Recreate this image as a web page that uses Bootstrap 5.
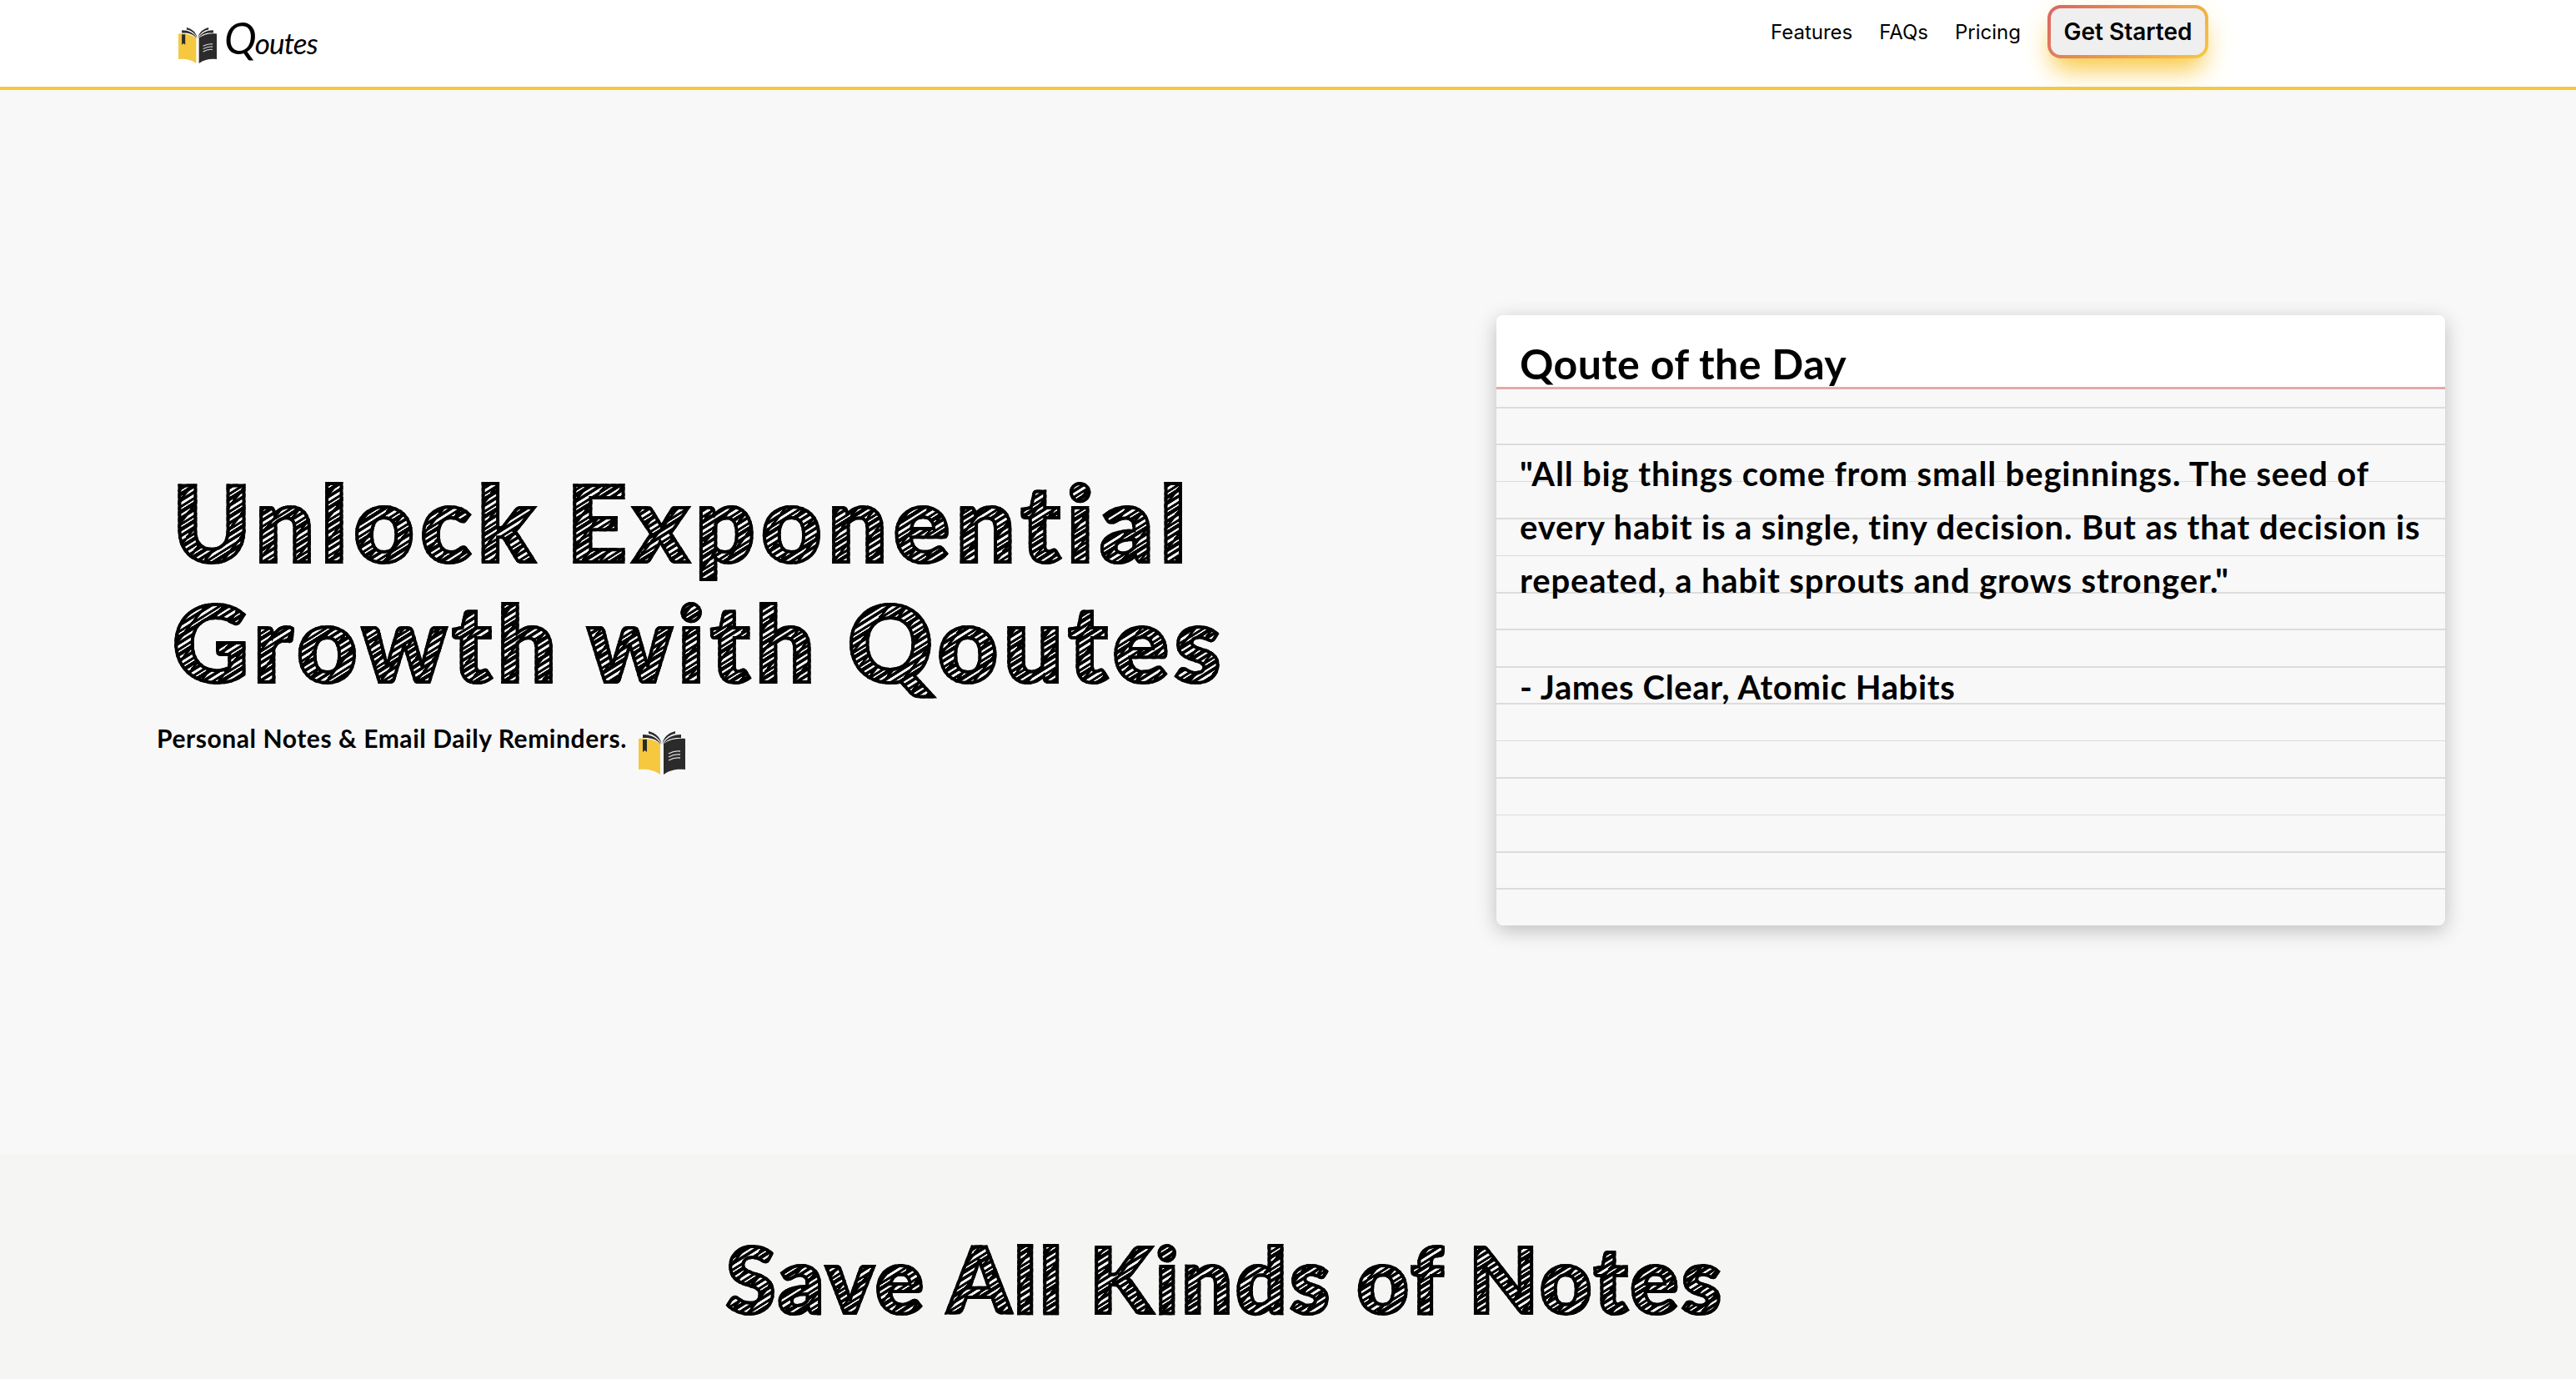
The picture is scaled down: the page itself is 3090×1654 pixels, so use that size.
<!DOCTYPE html>
<html lang="en">
<head>
    <meta charset="UTF-8">
    <meta name="viewport" content="width=device-width, initial-scale=1.0">
    <title>Qoutes</title>
    <!-- Bootstrap CSS -->
    <link rel="stylesheet" href="https://cdn.jsdelivr.net/npm/bootstrap@5.3.2/dist/css/bootstrap.min.css">
    <style>
        body {
            font-family: Lato, "Liberation Sans", sans-serif;
            background: #f8f8f8;
            color: #000;
            overflow: hidden;
        }
        .top-bar {
            height: 108px;
            background: #fff;
            border-bottom: 4px solid #f5c842;
            padding: 0 441px 0 214px;
        }
        .brand-link {
            margin-top: 18px;
            color: #000;
            font-style: italic;
            font-size: 35px;
            line-height: 54px;
            letter-spacing: -0.9px;
        }
        .brand-link .book { margin: 15px 9px 0 0; }
        .brand-link .big-q { font-size: 52px; line-height: 54px; letter-spacing: -2px; }
        .top-links {
            gap: 32px;
            font-family: Inter, "Liberation Sans", sans-serif;
        }
        .top-links .nav-link {
            margin-top: 21px;
            padding: 0;
            color: #000;
            font-size: 24px;
            line-height: 36px;
            letter-spacing: 0;
        }
        .btn-start, .btn-start:hover {
            width: 193px;
            height: 64px;
            margin-top: 6px;
            padding: 0;
            border: 4px solid transparent;
            border-radius: 16px;
            background: linear-gradient(#efefef, #efefef) padding-box,
                        linear-gradient(135deg, #da6464, #e89654 50%, #f7c843) border-box;
            box-shadow: 0 20px 30px -8px #f8c83f, 0 8px 36px rgba(248, 200, 63, 0.16);
            color: #000;
            font-size: 28px;
            font-weight: 600;
            line-height: 57px;
            letter-spacing: 0;
        }

        .hero { height: 1276px; }
        .hero-copy { padding: 446px 0 0 188px; }
        /* pencil shading inside an outlined letter */
        .sketch {
            font-weight: 900;
            color: transparent;
            background:
                repeating-linear-gradient(128deg, #000 0 2.5px, transparent 3.5px 17px),
                repeating-linear-gradient(148deg, #000 0 4px, #f8f8f8 4.6px 6.2px, #000 7px 10px, #f8f8f8 10.6px 13px, #000 13.6px 16px, #f8f8f8 16.5px 17.6px, #000 18px);
            -webkit-background-clip: text;
            background-clip: text;
            -webkit-text-stroke: 4px #000;
        }
        .hero-title {
            margin: 0 0 25px 19px;
            font-size: 126px;
            line-height: 144px;
            letter-spacing: 7.3px;
            word-spacing: -6px;
            width: 1290px;
        }
        .hero-title .line-two { letter-spacing: 6.3px; word-spacing: -3px; }
        .hero-sub {
            margin: 0;
            font-size: 30px;
            font-weight: 700;
            line-height: 37px;
            letter-spacing: 0.57px;
        }
        .hero-copy .book { margin: 10px 0 0 14px; }

        .note-card {
            width: 1138px;
            height: 732px;
            margin: 270px 157px 0 0;
            border: 0;
            border-radius: 8px;
            background: #f8f8f8;
            box-shadow: 0 6px 24px rgba(0, 0, 0, 0.24);
            overflow: hidden;
        }
        .note-head {
            height: 89px;
            padding: 28px 0 0 28px;
            background: #fff;
            border-bottom: 3px solid #e8a8a8;
            font-size: 50px;
            font-weight: 700;
            line-height: 60px;
            letter-spacing: 0.4px;
        }
        .note-lines { position: absolute; left: 0; top: 0; }
        .note-text {
            position: relative;
            padding: 69px 0 0 28px;
            font-size: 40px;
            font-weight: 700;
            line-height: 64px;
            letter-spacing: 0.85px;
            white-space: nowrap;
        }
        .note-text p { margin: 0 0 64px; }
        .note-text .author { letter-spacing: 0.65px; }

        .kinds {
            height: 270px;
            padding: 84px 0 0 871px;
            background: #f5f5f3;
        }
        .kinds-title {
            margin: 0;
            width: 1230px;
            font-size: 108px;
            line-height: 130px;
            letter-spacing: 3.5px;
        }
    </style>
</head>
<body>
    <!-- Book drawing shared by the logo and the hero -->
    <svg class="d-none">
        <symbol id="book" viewBox="0 0 56 52" preserveAspectRatio="none">
            <path d="M0 9C9 8 19 10 26 15V52C18 46 9 45 0 46Z" fill="#f6c83f"/>
            <path d="M56 9C46 8 37 10 30 15V52C38 46 47 45 56 46Z" fill="#2b2b2b"/>
            <path d="M5 10H10V25L7.500 23L5 25Z" fill="#2b2b2b"/>
            <path d="M5 4C15 4 23 8 27 16C21 9 14 7.500 5 8Z" fill="#2b2b2b"/>
            <path d="M12 0C20 2 26 7 27.500 15C24 8 18 4 12 3Z" fill="#2b2b2b"/>
            <path d="M51 4C41 4 33 8 29 16C35 9 42 7.500 51 8Z" fill="#2b2b2b"/>
            <path d="M44 0C36 2 30 7 28.500 15C32 8 38 4 44 3Z" fill="#2b2b2b"/>
            <path d="M36 27Q43 23 50 24M36 31Q43 27 50 28M36 35Q43 31 50 32" fill="none" stroke="#ddd" stroke-width="1.300"/>
        </symbol>
    </svg>

    <nav class="top-bar d-flex align-items-start">
        <a class="brand-link d-flex align-items-start text-decoration-none" href="#">
            <svg class="book" width="46" height="43"><use href="#book"/></svg>
            <span><span class="big-q">Q</span>outes</span>
        </a>
        <div class="top-links d-flex align-items-start ms-auto">
            <a class="nav-link" href="#">Features</a>
            <a class="nav-link" href="#">FAQs</a>
            <a class="nav-link" href="#">Pricing</a>
            <button type="button" class="btn btn-start">Get Started</button>
        </div>
    </nav>

    <section class="hero d-flex justify-content-between align-items-start">
        <div class="hero-copy">
            <h1 class="hero-title sketch">Unlock Exponential<br><span class="line-two">Growth with Qoutes</span></h1>
            <div class="d-flex align-items-start">
                <p class="hero-sub">Personal Notes &amp; Email Daily Reminders.</p>
                <svg class="book" width="56" height="52"><use href="#book"/></svg>
            </div>
        </div>
        <div class="card note-card">
            <svg class="note-lines" width="1138" height="732" shape-rendering="crispEdges">
                <g stroke="#dcdcdc" stroke-width="2">
                    <path d="M0 111H1138M0 155H1138M0 244H1138M0 333H1138M0 377H1138M0 422H1138M0 466H1138M0 555H1138M0 644H1138M0 688H1138"/>
                    <path d="M0 199.500H1138M0 288.500H1138M0 510.500H1138M0 599.500H1138" stroke-width="1"/>
                </g>
            </svg>
            <div class="note-head">Qoute of the Day</div>
            <div class="note-text">
                <p>"All big things come from small beginnings. The seed of<br>every habit is a single, tiny decision. But as that decision is<br>repeated, a habit sprouts and grows stronger."</p>
                <p class="author">- James Clear, Atomic Habits</p>
            </div>
        </div>
    </section>

    <section class="kinds">
        <h2 class="kinds-title sketch">Save All Kinds of Notes</h2>
    </section>

    <!-- Bootstrap JS -->
    <script src="https://cdn.jsdelivr.net/npm/bootstrap@5.3.2/dist/js/bootstrap.bundle.min.js"></script>
</body>
</html>
